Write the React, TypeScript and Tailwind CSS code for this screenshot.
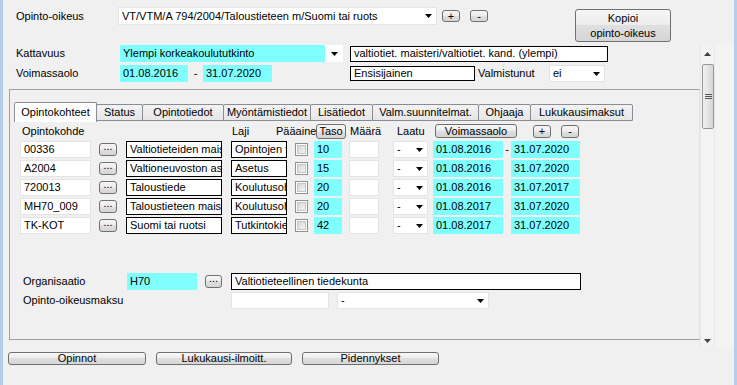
import React from 'react';

const Arrow: React.FC<{ up?: boolean; color?: string }> = ({ up, color = '#000' }) => (
  <svg width="7" height="4" viewBox="0 0 7 4" className="shrink-0">
    {up ? <polygon points="0,4 7,4 3.5,0" fill={color} /> : <polygon points="0,0 7,0 3.5,4" fill={color} />}
  </svg>
);

const Btn: React.FC<{ className?: string; children?: React.ReactNode }> = ({ className = '', children }) => (
  <div
    className={`flex items-center justify-center rounded-[3px] border border-[#707070] bg-[linear-gradient(#f6f6f6,#ececec_50%,#dfdfdf_50%,#d6d6d6)] leading-none shrink-0 ${className}`}
  >
    {children}
  </div>
);

type Kind = 'cyan' | 'white' | 'black';

const Field: React.FC<{ kind: Kind; className?: string; children?: React.ReactNode }> = ({ kind, className = '', children }) => {
  const look =
    kind === 'cyan'
      ? 'bg-[#80ffff]'
      : kind === 'black'
        ? 'bg-white border border-black'
        : 'bg-white border border-[#e4e4e4]';
  return (
    <div className={`flex items-center pl-[3px] overflow-hidden whitespace-nowrap leading-none shrink-0 ${look} ${className}`}>
      {children}
    </div>
  );
};

// dropdown: text part plus a fixed arrow part on the right
const Combo: React.FC<{ className?: string; text: string; cyan?: boolean }> = ({ className = '', text, cyan }) => (
  <div className={`flex items-stretch bg-white shrink-0 leading-none ${cyan ? '' : 'border border-[#e4e4e4]'} ${className}`}>
    <div className={`flex items-center pl-[3px] flex-1 overflow-hidden whitespace-nowrap ${cyan ? 'bg-[#80ffff]' : ''}`}>{text}</div>
    <div className={`flex items-center justify-center shrink-0 ${cyan ? 'w-[18px]' : 'w-[15px]'}`}>
      <Arrow />
    </div>
  </div>
);

const Check: React.FC = () => (
  <div className="w-[13px] h-[13px] border border-[#8e8f8f] bg-white p-[1px] shrink-0">
    <div className="w-full h-full bg-[linear-gradient(135deg,#d6d6d6,#f4f4f4)] border border-[#c4c4c4]" />
  </div>
);

const tabs = [
  { label: 'Opintokohteet', w: 'w-[83px]' },
  { label: 'Status', w: 'w-[47px]' },
  { label: 'Opintotiedot', w: 'w-[82px]' },
  { label: 'Myöntämistiedot', w: 'w-[88px]' },
  { label: 'Lisätiedot', w: 'w-[63px]' },
  { label: 'Valm.suunnitelmat.', w: 'w-[107px]' },
  { label: 'Ohjaaja', w: 'w-[53px]' },
  { label: 'Lukukausimaksut', w: 'w-[103px]' },
];

const rows = [
  { code: '00336', name: 'Valtiotieteiden maisteri', laji: 'Opintojen tavoite', taso: '10', start: '01.08.2016', end: '31.07.2020', dash: true },
  { code: 'A2004', name: 'Valtioneuvoston asetus', laji: 'Asetus', taso: '15', start: '01.08.2016', end: '31.07.2020' },
  { code: '720013', name: 'Taloustiede', laji: 'Koulutusohjelma', taso: '20', start: '01.08.2016', end: '31.07.2017' },
  { code: 'MH70_009', name: 'Taloustieteen maisteri', laji: 'Koulutusohjelma', taso: '20', start: '01.08.2017', end: '31.07.2020' },
  { code: 'TK-KOT', name: 'Suomi tai ruotsi', laji: 'Tutkintokieli', taso: '42', start: '01.08.2017', end: '31.07.2020' },
];

export default function App() {
  return (
    <div className="w-[737px] h-[385px] bg-[#f0f0f0] border-l-[3px] border-r-[3px] border-[#b4cde9] flex flex-col text-[11px] text-black font-['Liberation_Sans',Arial,sans-serif] overflow-hidden">
      {/* top: opinto-oikeus */}
      <div className="h-[45px] flex items-start pl-[13px] shrink-0">
        <div className="w-[102px] mt-[11px] leading-none">Opinto-oikeus</div>
        <Combo className="w-[319px] h-[18px] mt-[7px]" text="VT/VTM/A 794/2004/Taloustieteen m/Suomi tai ruots" />
        <Btn className="w-[18px] h-[12px] mt-[10px] ml-[5px]">+</Btn>
        <Btn className="w-[18px] h-[12px] mt-[10px] ml-[10px]">-</Btn>
        <Btn className="w-[96px] h-[33px] mt-[9px] ml-[87px] flex-col gap-[4px] leading-none">
          <span>Kopioi</span>
          <span>opinto-oikeus</span>
        </Btn>
      </div>

      {/* scrolling body */}
      <div className="flex h-[302px] shrink-0">
        <div className="w-[697px] flex flex-col">
          <div className="h-[17px] flex items-center pl-[13px]">
            <div className="w-[104px]">Kattavuus</div>
            <Combo cyan className="w-[223px] h-[17px]" text="Ylempi korkeakoulututkinto" />
            <Field kind="black" className="w-[258px] h-[16px] ml-[7px]">valtiotiet. maisteri/valtiotiet. kand. (ylempi)</Field>
          </div>
          <div className="h-[17px] flex items-center pl-[13px] mt-[3px]">
            <div className="w-[104px]">Voimassaolo</div>
            <Field kind="cyan" className="w-[68px] h-[17px]">01.08.2016</Field>
            <div className="w-[15px] text-center">-</div>
            <Field kind="cyan" className="w-[69px] h-[17px]">31.07.2020</Field>
            <Field kind="black" className="w-[125px] h-[15px] ml-[78px]">Ensisijainen</Field>
            <div className="w-[74px] pl-[3px]">Valmistunut</div>
            <Combo className="w-[56px] h-[17px]" text="ei" />
          </div>

          {/* frame */}
          <div className="ml-[6px] mt-[7px] w-[691px] h-[251px] border border-[#a0a0a0] border-r-[#e2e2e2] flex flex-col">
            <div className="flex items-end h-[19px] mt-[12px] pl-[4px]">
              {tabs.map((t, i) =>
                i === 0 ? (
                  <div key={t.label} className={`${t.w} h-[20px] -mb-px border border-b-0 border-[#898c95] bg-white flex items-center justify-center rounded-t-[2px] relative z-10`}>
                    {t.label}
                  </div>
                ) : (
                  <div key={t.label} className={`${t.w} h-[17px] -ml-px border border-[#898c95] bg-[linear-gradient(#f3f3f3,#e6e6e6)] flex items-center justify-center rounded-t-[2px]`}>
                    {t.label}
                  </div>
                ),
              )}
            </div>

            {/* headers */}
            <div className="flex items-center h-[16px] mt-[2px] pl-[12px]">
              <div className="w-[210px]">Opintokohde</div>
              <div className="w-[44px]">Laji</div>
              <div className="w-[40px]">Pääaine</div>
              <Btn className="w-[30px] h-[15px]">Taso</Btn>
              <div className="w-[47px] ml-[4px]">Määrä</div>
              <div className="w-[38px]">Laatu</div>
              <Btn className="w-[82px] h-[14px]">Voimassaolo</Btn>
              <Btn className="w-[18px] h-[13px] ml-[16px]">+</Btn>
              <Btn className="w-[18px] h-[13px] ml-[10px]">-</Btn>
            </div>

            {rows.map((r) => (
              <div key={r.code} className="flex items-center h-[17px] mt-[2px] pl-[10px]">
                <Field kind="white" className="w-[71px] h-[17px]">{r.code}</Field>
                <Btn className="w-[18px] h-[13px] ml-[8px] items-end pb-[3px]">...</Btn>
                <Field kind="black" className="w-[96px] h-[17px] ml-[9px]">{r.name}</Field>
                <Field kind="black" className="w-[56px] h-[17px] ml-[9px]">{r.laji}</Field>
                <div className="ml-[8px]"><Check /></div>
                <Field kind="cyan" className="w-[28px] h-[17px] ml-[6px]">{r.taso}</Field>
                <Field kind="white" className="w-[30px] h-[17px] ml-[7px]" />
                <Combo className="w-[35px] h-[17px] ml-[14px]" text="-" />
                <Field kind="cyan" className="w-[70px] h-[17px] ml-[5px]">{r.start}</Field>
                <div className="w-[8px] text-center leading-none">{r.dash ? '-' : ''}</div>
                <Field kind="cyan" className="w-[69px] h-[17px]">{r.end}</Field>
              </div>
            ))}

            <div className="flex items-center h-[17px] mt-[39px] pl-[13px]">
              <div className="w-[104px]">Organisaatio</div>
              <Field kind="cyan" className="w-[70px] h-[17px]">H70</Field>
              <Btn className="w-[17px] h-[13px] ml-[8px] items-end pb-[3px]">...</Btn>
              <Field kind="black" className="w-[350px] h-[17px] ml-[9px]">Valtiotieteellinen tiedekunta</Field>
            </div>
            <div className="flex items-center h-[17px] mt-[2px] pl-[13px]">
              <div className="w-[208px]">Opinto-oikeusmaksu</div>
              <Field kind="white" className="w-[98px] h-[17px]" />
              <Combo className="w-[152px] h-[17px] ml-[8px]" text="-" />
            </div>
          </div>
        </div>

        {/* scrollbar */}
        <div className="w-[15px] flex flex-col border-l border-r border-[#e8e8e8] bg-[#f3f3f3]">
          <div className="h-[17px] flex items-center justify-center">
            <Arrow up color="#404040" />
          </div>
          <div className="ml-[1px] mt-[2px] w-[12px] h-[65px] rounded-[2px] border border-[#979797] bg-[linear-gradient(90deg,#f2f2f2,#e2e2e2_55%,#d6d6d6)] flex flex-col items-center justify-center gap-[1px]">
            <div className="w-[7px] h-px bg-[#555]" />
            <div className="w-[7px] h-px bg-[#555]" />
            <div className="w-[7px] h-px bg-[#555]" />
          </div>
          <div className="flex-1" />
          <div className="h-[12px] flex items-center justify-center">
            <Arrow color="#404040" />
          </div>
        </div>
        <div className="flex-1 bg-[#f4f4f4]" />
      </div>

      {/* bottom buttons */}
      <div className="flex pl-[5px] mt-[5px]">
        <Btn className="w-[138px] h-[13px]">Opinnot</Btn>
        <Btn className="w-[136px] h-[13px] ml-[10px]">Lukukausi-ilmoitt.</Btn>
        <Btn className="w-[137px] h-[13px] ml-[10px]">Pidennykset</Btn>
      </div>
    </div>
  );
}
